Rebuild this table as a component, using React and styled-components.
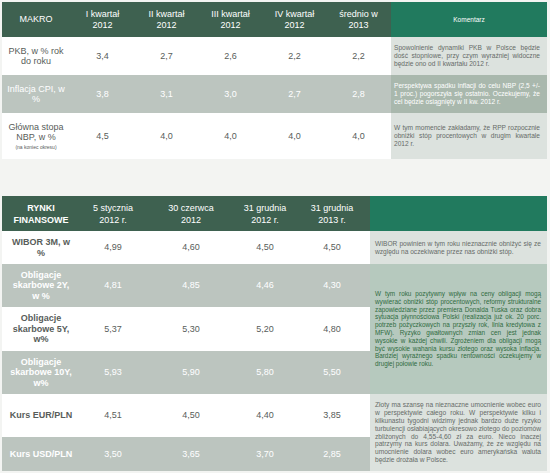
import React from "react";
import styled, { createGlobalStyle } from "styled-components";

const Global = createGlobalStyle`
  html, body { margin: 0; padding: 0; background: #f3f4f2; }
  body { font-family: "Liberation Sans", Arial, sans-serif; }
`;

const Page = styled.div`
  width: 550px;
  height: 473px;
  box-sizing: border-box;
  padding: 2px 0 0 2px;
  display: flex;
  flex-direction: column;
  gap: 37px;
  overflow: hidden;
`;

const Table = styled.div`
  display: grid;
  width: 545px;
  grid-template-columns: ${(p) => p.$cols};
  grid-template-rows: ${(p) => p.$rows};
`;

const tones = {
  head: { bg: "#3e6150", fg: "#ffffff" },
  accent: { bg: "#217a5e", fg: "#ffffff" },
  white: { bg: "#ffffff", fg: "#585d5a" },
  gray: { bg: "#bcc5bf", fg: "#ffffff" },
  light: { bg: "#dce2de", fg: "#666b68" },
  mid: { bg: "#a9b8ad", fg: "#ffffff" },
  green: { bg: "#b6c9be", fg: "#2f6b3f" },
};

const Cell = styled.div`
  display: flex;
  align-items: center;
  justify-content: center;
  text-align: center;
  background: ${(p) => tones[p.$tone].bg};
  color: ${(p) => tones[p.$tone].fg};
  font-size: 9px;
  line-height: ${(p) => (p.$tall ? "12px" : "10.5px")};
  font-weight: ${(p) => (p.$bold ? 700 : 400)};
  grid-row: ${(p) => (p.$span ? `span ${p.$span}` : "auto")};
`;

const Stack = styled.div`
  display: flex;
  flex-direction: column;
  align-items: center;
`;

const Note = styled.span`
  font-size: 5px;
  line-height: 8px;
`;

const Comment = styled.div`
  display: flex;
  align-items: center;
  grid-row: ${(p) => (p.$span ? `span ${p.$span}` : "auto")};
  background: ${(p) => tones[p.$tone].bg};
  color: ${(p) => tones[p.$tone].fg};
  padding: ${(p) => p.$pad};
  font-size: ${(p) => p.$size || "6.6px"};
  line-height: 7.8px;
  text-align: justify;
`;

const CommentHead = styled.div`
  display: flex;
  align-items: center;
  justify-content: center;
  background: #217a5e;
  color: #ffffff;
  font-size: 6.5px;
`;

const makroHead = [
  ["I kwartał", "2012"],
  ["II kwartał", "2012"],
  ["III kwartał", "2012"],
  ["IV kwartał", "2012"],
  ["średnio w", "2013"],
];

const makroRows = [
  {
    label: ["PKB, w % rok", "do roku"],
    tone: "white",
    values: ["3,4", "2,7", "2,6", "2,2", "2,2"],
    comment:
      "Spowolnienie dynamiki PKB w Polsce będzie dość stopniowe, przy czym wyraźniej widoczne będzie ono od II kwartału 2012 r.",
    ctone: "light",
  },
  {
    label: ["Inflacja CPI, w", "%"],
    tone: "gray",
    values: ["3,8", "3,1", "3,0", "2,7", "2,8"],
    comment:
      "Perspektywa spadku inflacji do celu NBP (2,5 +/- 1 proc.) pogorszyła się ostatnio. Oczekujemy, że cel będzie osiągnięty w II kw. 2012 r.",
    ctone: "mid",
  },
  {
    label: ["Główna stopa", "NBP, w %"],
    note: "(na koniec okresu)",
    tone: "white",
    values: ["4,5", "4,0", "4,0", "4,0", "4,0"],
    comment:
      "W tym momencie zakładamy, że RPP rozpocznie obniżki stóp procentowych w drugim kwartale 2012 r.",
    ctone: "light",
  },
];

const rynkiHead = [
  ["5 stycznia", "2012 r."],
  ["30 czerwca", "2012"],
  ["31 grudnia", "2012 r."],
  ["31 grudnia", "2013 r."],
];

const rynkiRows = [
  {
    label: ["WIBOR 3M, w", "%"],
    tone: "white",
    values: ["4,99", "4,60", "4,50", "4,50"],
    comment: {
      text: "WIBOR powinien w tym roku nieznacznie obniżyć się ze względu na oczekiwane przez nas obniżki stóp.",
      tone: "light",
      span: 1,
    },
  },
  {
    label: ["Obligacje", "skarbowe 2Y,", "w %"],
    tone: "gray",
    values: ["4,81", "4,85", "4,46", "4,30"],
    comment: {
      text: "W tym roku pozytywny wpływ na ceny obligacji mogą wywierać obniżki stóp procentowych, reformy strukturalne zapowiedziane przez premiera Donalda Tuska oraz dobra sytuacja płynnościowa Polski (realizacja już ok. 20 porc. potrzeb pożyczkowych na przyszły rok, linia kredytowa z MFW). Ryzyko gwałtownych zmian cen jest jednak wysokie w każdej chwili. Zgrożeniem dla obligacji mogą być wysokie wahania kursu złotego oraz wysoka inflacja. Bardziej wyraźnego spadku rentowności oczekujemy w drugiej połowie roku.",
      tone: "green",
      span: 3,
      size: "6.35px",
    },
  },
  {
    label: ["Obligacje", "skarbowe 5Y,", "w%"],
    tone: "white",
    values: ["5,37", "5,30", "5,20", "4,80"],
  },
  {
    label: ["Obligacje", "skarbowe 10Y,", "w%"],
    tone: "gray",
    values: ["5,93", "5,90", "5,80", "5,50"],
  },
  {
    label: ["Kurs EUR/PLN"],
    tone: "white",
    values: ["4,51", "4,50", "4,40", "3,85"],
    comment: {
      text: "Złoty ma szansę na nieznaczne umocnienie wobec euro w perspektywie całego roku. W perspektywie kilku i kilkunastu tygodni widzimy jednak bardzo duże ryzyko turbulencji osłabiających okresowo złotego do poziomów zbliżonych do 4,55-4,60 zł za euro. Nieco inaczej patrzymy na kurs dolara. Uważamy, że ze względu na umocnienie dolara wobec euro amerykańska waluta będzie drożała w Polsce.",
      tone: "light",
      span: 2,
    },
  },
  {
    label: ["Kurs USD/PLN"],
    tone: "gray",
    values: ["3,50", "3,65", "3,70", "2,85"],
  },
];

const Lines = ({ lines }) =>
  lines.map((l, i) => (
    <React.Fragment key={i}>
      {i > 0 && <br />}
      {l}
    </React.Fragment>
  ));

export default function App() {
  return (
    <>
      <Global />
      <Page>
        <Table $cols="68px 65px 63px 65px 63px 65px 156px" $rows="35px 38px 38px 46px">
          <Cell $tone="head">MAKRO</Cell>
          {makroHead.map((h, i) => (
            <Cell key={i} $tone="head">
              <span>
                <Lines lines={h} />
              </span>
            </Cell>
          ))}
          <CommentHead>Komentarz</CommentHead>
          {makroRows.map((r, ri) => (
            <React.Fragment key={ri}>
              <Cell $tone={r.tone}>
                <Stack>
                  <span>
                    <Lines lines={r.label} />
                  </span>
                  {r.note && <Note>{r.note}</Note>}
                </Stack>
              </Cell>
              {r.values.map((v, vi) => (
                <Cell key={vi} $tone={r.tone}>
                  {v}
                </Cell>
              ))}
              <Comment $tone={r.ctone} $pad="0 7px 0 3px">
                <span>{r.comment}</span>
              </Comment>
            </React.Fragment>
          ))}
        </Table>

        <Table $cols="78px 66px 90px 58px 76px 177px" $rows="35px 33px 43px 44px 43px 43px 34px">
          <Cell $tone="head" $bold $tall>
            <span>
              RYNKI
              <br />
              FINANSOWE
            </span>
          </Cell>
          {rynkiHead.map((h, i) => (
            <Cell key={i} $tone="head" $tall>
              <span>
                <Lines lines={h} />
              </span>
            </Cell>
          ))}
          <CommentHead />
          {rynkiRows.map((r, ri) => (
            <React.Fragment key={ri}>
              <Cell $tone={r.tone} $bold>
                <span>
                  <Lines lines={r.label} />
                </span>
              </Cell>
              {r.values.map((v, vi) => (
                <Cell key={vi} $tone={r.tone}>
                  {v}
                </Cell>
              ))}
              {r.comment && (
                <Comment
                  $tone={r.comment.tone}
                  $span={r.comment.span}
                  $size={r.comment.size}
                  $pad="0 6px 0 5px"
                >
                  <span>{r.comment.text}</span>
                </Comment>
              )}
            </React.Fragment>
          ))}
        </Table>
      </Page>
    </>
  );
}
